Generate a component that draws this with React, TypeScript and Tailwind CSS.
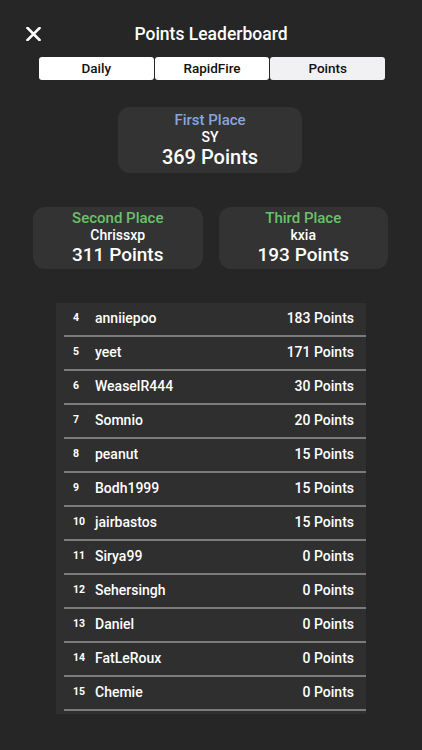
import React from 'react'

const rows = [
  {rank: 4, name: 'anniiepoo', points: 183},
  {rank: 5, name: 'yeet', points: 171},
  {rank: 6, name: 'WeaselR444', points: 30},
  {rank: 7, name: 'Somnio', points: 20},
  {rank: 8, name: 'peanut', points: 15},
  {rank: 9, name: 'Bodh1999', points: 15},
  {rank: 10, name: 'jairbastos', points: 15},
  {rank: 11, name: 'Sirya99', points: 0},
  {rank: 12, name: 'Sehersingh', points: 0},
  {rank: 13, name: 'Daniel', points: 0},
  {rank: 14, name: 'FatLeRoux', points: 0},
  {rank: 15, name: 'Chemie', points: 0},
]

const PodiumCard = ({label, name, points, labelColor, pointsSize, className}: {
  label: string
  name: string
  points: number
  labelColor: string
  pointsSize: string
  className: string
}) => (
  <div className={`flex flex-col items-center rounded-[12px] bg-[#333333] ${className}`}>
    <span className={`text-[15px] leading-[17px] font-medium ${labelColor}`}>{label}</span>
    <span className="text-[14px] leading-[17px] font-medium text-white">{name}</span>
    <span className={`font-medium text-white ${pointsSize}`}>{points} Points</span>
  </div>
)

const App = () => {
  return (
    <div className="w-[422px] h-[750px] bg-[#262626] overflow-hidden" style={{fontFamily: 'Roboto, "Noto Sans", sans-serif'}}>
      {/* header */}
      <div className="relative flex items-center justify-center h-[22px] mt-[23px]">
        <svg className="absolute left-[26px] top-[4px]" width="15" height="14" viewBox="0 0 15 14">
          <path d="M1.5 1 L13.5 13 M13.5 1 L1.5 13" stroke="#ffffff" strokeWidth="2.6" strokeLinecap="square" />
        </svg>
        <h1 className="text-[17.5px] font-medium text-white">Points Leaderboard</h1>
      </div>

      {/* tabs */}
      <div className="flex gap-[1px] ml-[39px] mr-[37px] mt-[12px] h-[23px]">
        <button className="flex-1 rounded-[3px] bg-white text-[13.5px] font-medium text-[#111]">Daily</button>
        <button className="flex-1 rounded-[3px] bg-white text-[13.5px] font-medium text-[#111]">RapidFire</button>
        <button className="flex-1 rounded-[3px] bg-[#f1f1f3] text-[13.5px] font-medium text-[#111]">Points</button>
      </div>

      {/* podium */}
      <PodiumCard
        label="First Place"
        name="SY"
        points={369}
        labelColor="text-[#86a6dc]"
        pointsSize="text-[20px] leading-[22px]"
        className="w-[184px] h-[66px] mx-auto mt-[27px] pt-[5px] translate-x-[-1px]"
      />
      <div className="flex gap-[16px] ml-[33px] mr-[34px] mt-[34px]">
        <PodiumCard
          label="Second Place"
          name="Chrissxp"
          points={311}
          labelColor="text-[#69c26a]"
          pointsSize="text-[19px] leading-[21px]"
          className="flex-1 h-[62px] pt-[3px]"
        />
        <PodiumCard
          label="Third Place"
          name="kxia"
          points={193}
          labelColor="text-[#69c26a]"
          pointsSize="text-[19px] leading-[21px]"
          className="flex-1 h-[62px] pt-[3px]"
        />
      </div>

      {/* list */}
      <div className="mx-[56px] mt-[34px] bg-[#2f2f2f] pb-[3px]">
        {rows.map((r) => (
          <div key={r.rank}>
            <div className="flex items-center h-[32px] pl-[17px] pr-[12px] pb-[2px]">
              <span className="w-[22px] text-[10.5px] font-bold text-white">{r.rank}</span>
              <span className="flex-1 text-[14px] font-medium text-white">{r.name}</span>
              <span className="text-[14px] font-medium text-white">{r.points} Points</span>
            </div>
            <div className="ml-[8px] h-[2px] bg-[#7c7c7c]" />
          </div>
        ))}
      </div>
    </div>
  )
}
export default App
